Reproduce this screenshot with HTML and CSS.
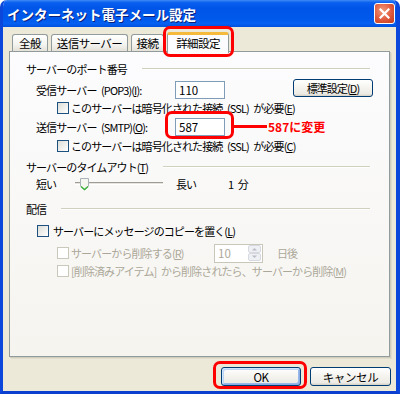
FILE: index.html
```html
<!DOCTYPE html>
<html lang="ja">

<head>
    <meta charset="UTF-8">
    <title>インターネット電子メール設定</title>
    <link rel="stylesheet" href="styles.css">
</head>

<body>

    <div class="window">
        <div class="titlebar">
            <span class="title">インターネット電子メール設定</span>
            <span class="close">
                <svg width="11" height="11" viewBox="0 0 11 11">
                    <path d="M1.5 1.5 L9.5 9.5 M9.5 1.5 L1.5 9.5" stroke="#fff" stroke-width="2.2" stroke-linecap="square" />
                </svg>
            </span>
        </div>

        <div class="client">
            <div class="tabs">
                <div class="tab tab-general">全般</div>
                <div class="tab tab-smtp">送信サーバー</div>
                <div class="tab tab-conn">接続</div>
                <div class="tab active">詳細設定<span class="mark mark-tab"></span></div>
            </div>

            <div class="panel">
                <div class="group-title"><span>サーバーのポート番号</span><i class="rule"></i></div>

                <div class="row row-pop">
                    <span class="port-label">受信サーバー (POP3)(<u>I</u>):</span>
                    <span class="field">110</span>
                    <span class="btn btn-std"><span>標準設定(<u>D</u>)</span></span>
                </div>

                <div class="row check sub row-ssl1">
                    <span class="box"></span><span>このサーバーは暗号化された接続 (SSL) が必要(<u>E</u>)</span>
                </div>

                <div class="row row-smtp">
                    <span class="port-label">送信サーバー (SMTP)(<u>O</u>):</span>
                    <span class="field field-smtp">587<span class="mark mark-field"></span></span>
                    <i class="note-line"></i>
                    <span class="note">587に変更</span>
                </div>

                <div class="row check sub row-ssl2">
                    <span class="box"></span><span>このサーバーは暗号化された接続 (SSL) が必要(<u>C</u>)</span>
                </div>

                <div class="group-title gt-timeout"><span>サーバーのタイムアウト(<u>T</u>)</span><i class="rule"></i></div>

                <div class="row row-slider">
                    <span class="s-short">短い</span>
                    <svg class="slider" width="88" height="16" viewBox="0 0 88 16">
                        <rect x="0" y="6" width="88" height="1" fill="#9d9c99" />
                        <rect x="0" y="7" width="88" height="1" fill="#e6e4dc" />
                        <rect x="0" y="8" width="88" height="1" fill="#fff" />
                        <path d="M5.5 2.5 H13.5 V10 L9.5 14 L5.5 10 Z" fill="#f6f6f1" stroke="#a8b2b8" />
                        <path d="M6 10.5 L9.5 13.5 L13 10.5" fill="none" stroke="#3cb33c" stroke-width="1.4" />
                    </svg>
                    <span class="s-long">長い</span>
                    <span class="s-value">1 分</span>
                </div>

                <div class="group-title gt-deliver"><span>配信</span><i class="rule"></i></div>

                <div class="row check main-check">
                    <span class="box"></span><span>サーバーにメッセージのコピーを置く(<u>L</u>)</span>
                </div>

                <div class="row check sub disabled row-del">
                    <span class="box"></span><span class="del-label">サーバーから削除する(<u>R</u>)</span>
                    <span class="spin">
                        <span class="spin-value">10</span>
                        <span class="spin-btns">
                            <svg width="13" height="16" viewBox="0 0 13 16">
                                <rect x="0.5" y="0.5" width="12" height="7" rx="1.5" fill="#eef0f4" stroke="#d6d9e0" />
                                <rect x="0.5" y="8.5" width="12" height="7" rx="1.5" fill="#eef0f4" stroke="#d6d9e0" />
                                <path d="M4 5.5 L6.5 3 L9 5.5 Z" fill="#b8bcc4" />
                                <path d="M4 10.5 L6.5 13 L9 10.5 Z" fill="#b8bcc4" />
                            </svg>
                        </span>
                    </span>
                    <span class="days">日後</span>
                </div>

                <div class="row check sub disabled row-del2">
                    <span class="box"></span><span>[削除済みアイテム] から削除されたら、サーバーから削除(<u>M</u>)</span>
                </div>
            </div>

            <div class="actions">
                <span class="btn btn-ok">OK<span class="mark mark-ok"></span></span>
                <span class="btn btn-cancel">キャンセル</span>
            </div>
        </div>
    </div>

</body>

</html>
```

FILE: styles.css
```css
body {
    margin: 0;
    background-color: #fff;
    font-family: "Noto Sans CJK JP", sans-serif;
    font-size: 11px;
    letter-spacing: -0.9px;
    word-spacing: 3px;
    color: #000;
}

.window {
    width: 400px;
    height: 394px;
    box-sizing: border-box;
    border-left: 3px solid #0a47da;
    border-right: 4px solid #0a47da;
    border-bottom: 3px solid #0a3fd0;
    border-radius: 7px 7px 0 0;
    display: flex;
    flex-direction: column;
    overflow: hidden;
}

.titlebar {
    height: 27px;
    margin: 0 -4px 0 -3px;
    padding: 0 5px 0 7px;
    display: flex;
    align-items: center;
    justify-content: space-between;
    background: linear-gradient(#3d8bf6 0, #0a5ef0 10%, #0055e8 30%, #0059ec 70%, #0660f2 88%, #0050dc 100%);
}

.title {
    color: #fff;
    font-size: 13.5px;
    font-weight: bold;
    letter-spacing: 0;
    text-shadow: 1px 1px 0 #0a1e7a;
}

.close {
    width: 19px;
    height: 19px;
    border: 1px solid #fff;
    border-radius: 3px;
    background: radial-gradient(circle at 40% 35%, #f09a7c 0, #e0593c 55%, #c13b1c 100%);
    display: flex;
    align-items: center;
    justify-content: center;
}

.client {
    flex: 1;
    background-color: #ece9d8;
    padding: 5px 6px 5px 6px;
    display: flex;
    flex-direction: column;
}

.tabs {
    height: 19px;
    display: flex;
    align-items: flex-start;
    padding-left: 3px;
    position: relative;
    z-index: 2;
}

.tab {
    height: 17px;
    margin-top: 2px;
    margin-right: 3px;
    box-sizing: border-box;
    border: 1px solid #919b9c;
    border-bottom: none;
    border-radius: 3px 3px 0 0;
    background: linear-gradient(#fff, #f3f3ef 60%, #e3e1d8);
    line-height: 16px;
    font-size: 11.5px;
    letter-spacing: -0.6px;
    text-align: center;
    position: relative;
}

.tab-general {
    width: 36px;
}

.tab-smtp {
    width: 77px;
}

.tab-conn {
    width: 33px;
}

.tab.active {
    width: 62px;
    height: 21px;
    margin-top: 0;
    padding-top: 1px;
    background: #fcfcfe;
    border-top: 3px solid #f5b93c;
    line-height: 15px;
}

.mark {
    position: absolute;
    border: 3px solid #f00;
    border-radius: 7px;
    pointer-events: none;
}

.mark-tab {
    left: -5px;
    right: -6px;
    top: -9px;
    bottom: -4px;
}

.panel {
    height: 306px;
    box-sizing: border-box;
    border: 1px solid #919b9c;
    background: linear-gradient(#fcfcfe, #f5f4ef);
    box-shadow: 1px 1px 0 #d0cebf, 2px 2px 0 #e0ddcc;
    padding: 9px 19px 0 16px;
}

.group-title {
    height: 16px;
    line-height: 16px;
    display: flex;
    align-items: center;
    white-space: nowrap;
}

.rule {
    flex: 1;
    margin-left: 15px;
    height: 1px;
    background-color: #d0d0bf;
    border-bottom: 1px solid #fff;
}

.gt-timeout {
    margin-top: 5px;
}

.gt-deliver {
    margin-top: 9px;
}

.row {
    display: flex;
    align-items: center;
    white-space: nowrap;
}

.row-pop {
    height: 19px;
    margin-top: 3px;
    padding-left: 10px;
}

.row-smtp {
    height: 19px;
    margin-top: 1px;
    padding-left: 10px;
}

.port-label {
    width: 139px;
}

.field {
    width: 50px;
    height: 18px;
    box-sizing: border-box;
    border: 1px solid #7f9db9;
    background-color: #fff;
    padding-left: 3px;
    line-height: 16px;
    font-size: 11.5px;
    letter-spacing: 0;
    position: relative;
}

.mark-field {
    left: -11px;
    right: -10px;
    top: -8px;
    bottom: -4px;
}

.note-line {
    width: 34px;
    height: 3px;
    margin-left: 8px;
    background-color: #f00;
}

.note {
    color: #f00;
    font-weight: bold;
    font-size: 12px;
    letter-spacing: 0;
    margin-left: 1px;
}

.btn {
    height: 18px;
    box-sizing: border-box;
    border: 1px solid #003c74;
    border-radius: 3px;
    background: linear-gradient(#fff, #f4f3ee 50%, #ecebe6 86%, #d6d0c5);
    display: flex;
    align-items: center;
    justify-content: center;
    position: relative;
}

.btn-std {
    width: 80px;
    margin-left: auto;
    margin-right: -3px;
    margin-bottom: 4px;
}

.check .box {
    width: 12px;
    height: 12px;
    box-sizing: border-box;
    border: 1px solid #1c5180;
    background: linear-gradient(135deg, #dcdcd7, #fff);
    margin-right: 2px;
    flex-shrink: 0;
}

.sub {
    padding-left: 31px;
    height: 16px;
}

.row-ssl1 {
    margin-top: 1px;
}

.row-ssl2 {
    margin-top: 2px;
}

.row-slider {
    height: 16px;
    margin-top: 1px;
    padding-left: 10px;
}

.s-short {
    width: 39px;
}

.s-long {
    width: 52px;
    margin-left: 13px;
}

.main-check {
    height: 16px;
    margin-top: 6px;
    padding-left: 11px;
}

.main-check .box {
    margin-right: 4px;
}

.disabled {
    color: #aca899;
}

.disabled .box {
    border-color: #cac8bb;
    background: #fff;
}

.row-del {
    height: 20px;
    margin-top: 4px;
}

.del-label {
    width: 143px;
}

.spin {
    width: 49px;
    height: 19px;
    box-sizing: border-box;
    border: 1px solid #c9c7ba;
    background-color: #fff;
    display: flex;
    align-items: center;
    justify-content: space-between;
    padding: 0 1px 0 3px;
    font-size: 11.5px;
    letter-spacing: 0;
}

.spin-btns {
    display: flex;
}

.days {
    margin-left: 14px;
}

.actions {
    display: flex;
    justify-content: flex-end;
    margin-top: 10px;
    margin-right: -1px;
}

.actions .btn {
    height: 19px;
    font-size: 11.5px;
    letter-spacing: -0.4px;
}

.btn-ok {
    width: 80px;
    margin-right: 9px;
    box-shadow: inset 1px 1px 0 #cee7ff, inset -1px -1px 0 #89ade4, inset 2px 2px 0 #bcd4f6, inset -2px -2px 0 #98b8ea;
}

.btn-cancel {
    width: 81px;
}

.mark-ok {
    left: -9px;
    right: -7px;
    top: -7px;
    bottom: -4px;
}
```
